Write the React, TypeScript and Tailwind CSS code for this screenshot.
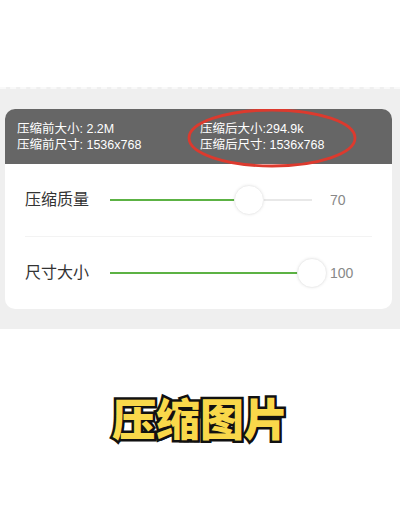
import React from "react";

const font = { fontFamily: '"Liberation Sans", "Noto Sans CJK SC", sans-serif' };

function Slider({ label, value, pct }: { label: string; value: number; pct: number }) {
  return (
    <div className="flex items-center h-[72px]">
      <div className="w-[85px] text-[16px] text-[#333] leading-none">{label}</div>
      <div className="relative w-[202px] h-[30px] flex items-center">
        <div className="absolute left-0 right-0 h-[2px] bg-[#e8e8e8]" />
        <div className="absolute left-0 h-[2px] bg-[#5cb244]" style={{ width: `${pct}%` }} />
        <div
          className="absolute w-[30px] h-[30px] rounded-full bg-white border border-[#eeeeee] shadow-[0_0_3px_rgba(0,0,0,0.08)]"
          style={{ left: `calc(${pct}% - 15px)` }}
        />
      </div>
      <div className="flex-1 text-[14px] text-[#888] pl-[18px]">{value}</div>
    </div>
  );
}

export default function App() {
  return (
    <div className="w-[400px] h-[517px] bg-white flex flex-col" style={font}>
      <div className="h-[87px]" />
      <div className="bg-[#efefef] pt-[20px] pb-[20px] px-[5px] border-t-2 border-dashed border-t-[#f9f9f9]">
        <div className="w-[387px] rounded-[10px] overflow-hidden bg-white">
          <div className="relative bg-[#666666] h-[55px] flex items-center text-white text-[12.5px] leading-[16px] pt-[1px]">
            <div className="w-[195px] pl-[12px]">
              <div>压缩前大小: 2.2M</div>
              <div>压缩前尺寸: 1536x768</div>
            </div>
            <div>
              <div>压缩后大小:294.9k</div>
              <div>压缩后尺寸: 1536x768</div>
            </div>
            <svg className="absolute left-[181px] top-[-2px]" width="172" height="62" viewBox="0 0 172 62">
              <ellipse cx="86" cy="31" rx="83" ry="28" fill="none" stroke="#dc3a2e" strokeWidth="2.8" />
            </svg>
          </div>
          <div className="px-[20px]">
            <div className="border-b border-[#f3f3f3]">
              <Slider label="压缩质量" value={70} pct={69} />
            </div>
            <Slider label="尺寸大小" value={100} pct={100} />
          </div>
        </div>
      </div>
      <div className="flex justify-center pt-[66px]">
        <div
          className="text-[44px] font-black leading-none text-[#f9d84a] [font-family:'Noto_Sans_CJK_SC',sans-serif] [-webkit-text-stroke:5px_#111] [paint-order:stroke_fill] [text-shadow:2px_2px_0_#111]"
        >
          压缩图片
        </div>
      </div>
    </div>
  );
}
